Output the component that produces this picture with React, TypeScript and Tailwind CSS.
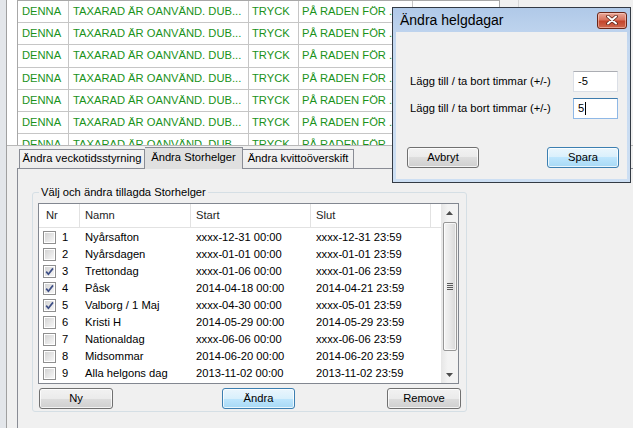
import React from "react";

const holidays = [
  { nr: 1, name: "Nyårsafton", start: "xxxx-12-31 00:00", end: "xxxx-12-31 23:59", checked: false },
  { nr: 2, name: "Nyårsdagen", start: "xxxx-01-01 00:00", end: "xxxx-01-01 23:59", checked: false },
  { nr: 3, name: "Trettondag", start: "xxxx-01-06 00:00", end: "xxxx-01-06 23:59", checked: true },
  { nr: 4, name: "Påsk", start: "2014-04-18 00:00", end: "2014-04-21 23:59", checked: true },
  { nr: 5, name: "Valborg / 1 Maj", start: "xxxx-04-30 00:00", end: "xxxx-05-01 23:59", checked: true },
  { nr: 6, name: "Kristi H", start: "2014-05-29 00:00", end: "2014-05-29 23:59", checked: false },
  { nr: 7, name: "Nationaldag", start: "xxxx-06-06 00:00", end: "xxxx-06-06 23:59", checked: false },
  { nr: 8, name: "Midsommar", start: "2014-06-20 00:00", end: "2014-06-20 23:59", checked: false },
  { nr: 9, name: "Alla helgons dag", start: "2013-11-02 00:00", end: "2013-11-02 23:59", checked: false },
];

function CheckBox({ checked }: { checked: boolean }) {
  return (
    <div className="w-[13px] h-[13px] shrink-0 border border-[#8f8f8f] bg-white p-[1px]">
      <div className="w-[9px] h-[9px] bg-[linear-gradient(135deg,#d4d4d4,#f6f6f6)]">
        {checked && (
          <svg width="9" height="9" viewBox="0 0 9 9" className="block">
            <path d="M1.2 4.6 L3.4 7.2 L8 1.4" fill="none" stroke="#3e4f86" strokeWidth="1.7" />
          </svg>
        )}
      </div>
    </div>
  );
}

function WinButton({ label, primary, className }: { label: string; primary?: boolean; className: string }) {
  return (
    <div
      className={
        "h-[21px] flex items-center justify-center rounded-[3px] border shadow-[inset_0_0_0_1px_rgba(255,255,255,0.75)] " +
        (primary
          ? "border-[#3c7fb1] bg-[linear-gradient(to_bottom,#eaf6fd_0%,#d9f0fc_50%,#bee6fd_50%,#a7d9f5_100%)] "
          : "border-[#707070] bg-[linear-gradient(to_bottom,#f2f2f2_0%,#ebebeb_50%,#dddddd_50%,#cfcfcf_100%)] ") +
        className
      }
    >
      {label}
    </div>
  );
}

function GridRow() {
  return (
    <div className="flex h-[22.2px] border-b border-[#c6c6c6] text-[#1a921a] whitespace-nowrap">
      <div className="w-[51px] border-r border-[#c6c6c6] pl-[4px] flex items-center overflow-hidden">DENNA</div>
      <div className="w-[180px] border-r border-[#c6c6c6] pl-[4px] flex items-center overflow-hidden">TAXARAD ÄR OANVÄND. DUB...</div>
      <div className="w-[50px] border-r border-[#c6c6c6] pl-[3px] flex items-center overflow-hidden">TRYCK</div>
      <div className="w-[114px] border-r border-[#c6c6c6] pl-[3px] flex items-center overflow-hidden">PÅ RADEN FÖR ...</div>
      <div className="w-[85px]" />
    </div>
  );
}

export default function App() {
  return (
    <div className="relative w-[633px] h-[428px] overflow-hidden bg-[#f0f0f0] font-['Liberation_Sans',Arial,sans-serif] text-[11.2px] text-black leading-none">
      <div className="flex h-full">
        <div className="w-[6px] shrink-0 bg-[#e3e6ea]" />
        <div className="w-px shrink-0 bg-[#a0a0a0]" />
        <div className="flex flex-col flex-1 min-w-0">
          {/* data grid */}
          <div className="flex h-[146px] shrink-0 overflow-hidden border-b border-[#b8b8b8]">
            <div className="w-[10px] shrink-0 bg-white" />
            <div className="w-[483px] shrink-0 bg-white border-l border-r border-t border-[#a8a8a8]">
              {Array.from({ length: 7 }).map((_, i) => (
                <GridRow key={i} />
              ))}
            </div>
            <div className="w-[18px] shrink-0" />
            <div className="w-px shrink-0 bg-[#d6d6d6]" />
          </div>
          {/* tabs */}
          <div className="flex h-[22px] shrink-0 items-end pl-[12px]">
            <div className="w-[126px] h-[19px] border-l border-t border-r border-[#898c95] bg-[linear-gradient(to_bottom,#f4f4f4,#ececec)] flex items-center justify-center">
              Ändra veckotidsstyrning
            </div>
            <div className="relative z-10 w-[98px] h-[22px] -mb-px border-t border-r border-[#898c95] bg-[#e0e0e0] flex items-center justify-center pb-[2px]">
              Ändra Storhelger
            </div>
            <div className="w-[111px] h-[19px] border-t border-r border-[#898c95] bg-[linear-gradient(to_bottom,#f4f4f4,#ececec)] flex items-center justify-center">
              Ändra kvittoöverskift
            </div>
          </div>
          {/* tab panel */}
          <div className="ml-[10px] flex-1 border-l border-t border-[#898c95] bg-[#f0f0f0]">
            <fieldset className="ml-[14px] mt-[16px] w-[435px] border border-[#d5dfe5] rounded-[3px] px-[5px] pb-[2px]">
              <legend className="ml-[1px] px-[2px] leading-[14px]">Välj och ändra tillagda Storhelger</legend>
              {/* list view */}
              <div className="mt-[4px] w-[421px] h-[181px] border border-[#828790] bg-white flex">
                <div className="w-[402px] flex flex-col">
                  <div className="flex h-[24px] border-b border-[#e2e2e2] text-[#1e1e1e]">
                    <div className="w-[41px] border-r border-[#e2e2e2] pl-[7px] flex items-center">Nr</div>
                    <div className="w-[111px] border-r border-[#e2e2e2] pl-[5px] flex items-center">Namn</div>
                    <div className="w-[120px] border-r border-[#e2e2e2] pl-[5px] flex items-center">Start</div>
                    <div className="w-[120px] border-r border-[#e2e2e2] pl-[5px] flex items-center">Slut</div>
                    <div className="w-[10px]" />
                  </div>
                  <div className="pt-px">
                    {holidays.map((h) => (
                      <div key={h.nr} className="flex h-[17px] items-center whitespace-nowrap">
                        <div className="w-[41px] pl-[4px] flex items-center">
                          <CheckBox checked={h.checked} />
                          <span className="ml-[6px]">{h.nr}</span>
                        </div>
                        <div className="w-[111px] pl-[5px]">{h.name}</div>
                        <div className="w-[120px] pl-[5px]">{h.start}</div>
                        <div className="w-[120px] pl-[5px]">{h.end}</div>
                      </div>
                    ))}
                  </div>
                </div>
                {/* scrollbar */}
                <div className="w-[17px] flex flex-col bg-[linear-gradient(to_right,#e6e6e6,#f3f3f3_40%,#f3f3f3)]">
                  <div className="h-[17px] flex items-center justify-center">
                    <svg width="7" height="4" viewBox="0 0 7 4">
                      <polygon points="0,4 3.5,0 7,4" fill="#4d4d4d" />
                    </svg>
                  </div>
                  <div className="mt-px ml-[2px] w-[14px] h-[129px] rounded-[2px] border border-[#979797] bg-[linear-gradient(to_right,#f4f4f4,#e8e8e8_50%,#d8d8d8)] shadow-[inset_0_0_0_1px_rgba(255,255,255,0.7)] flex items-center justify-center">
                    <div className="flex flex-col gap-[1px]">
                      <div className="w-[6px] h-px bg-[#5a5a5a]" />
                      <div className="w-[6px] h-px bg-[#5a5a5a]" />
                      <div className="w-[6px] h-px bg-[#5a5a5a]" />
                      <div className="w-[6px] h-px bg-[#5a5a5a]" />
                    </div>
                  </div>
                  <div className="flex-1" />
                  <div className="h-[17px] flex items-center justify-center">
                    <svg width="7" height="4" viewBox="0 0 7 4">
                      <polygon points="0,0 7,0 3.5,4" fill="#4d4d4d" />
                    </svg>
                  </div>
                </div>
              </div>
              {/* buttons */}
              <div className="flex mt-[4px]">
                <WinButton label="Ny" className="ml-[1px] w-[74px]" />
                <WinButton label="Ändra" primary className="ml-[109px] w-[73px]" />
                <WinButton label="Remove" className="ml-[92px] w-[74px]" />
              </div>
            </fieldset>
          </div>
        </div>
      </div>

      {/* dialog window */}
      <div className="absolute left-[392px] top-[7px] w-[239px] h-[176px] border border-[#333a44] bg-[linear-gradient(to_bottom,#b0c9e8,#c4d8f0_20%,#cddff3)] px-[3px] pb-[3px] flex flex-col">
        <div className="h-[24px] flex items-center justify-between pl-[4px]">
          <span className="text-[14px] text-black">Ändra helgdagar</span>
          <div className="w-[30px] h-[17px] rounded-[3px] border border-[#6a2618] bg-[linear-gradient(to_bottom,#e9a99a_0%,#d9735e_45%,#c4452c_55%,#cf6a4f_100%)] flex items-center justify-center shadow-[inset_0_0_0_1px_rgba(255,220,210,0.5)]">
            <svg width="12" height="10" viewBox="0 0 12 10">
              <path d="M2 1.5 L10 8.5 M10 1.5 L2 8.5" stroke="#5a2216" strokeWidth="3.6" strokeLinecap="round" />
              <path d="M2 1.5 L10 8.5 M10 1.5 L2 8.5" stroke="#ffffff" strokeWidth="2" strokeLinecap="round" />
            </svg>
          </div>
        </div>
        <div className="flex-1 bg-[#f0f0f0] pt-[39px]">
          <div className="flex h-[21px] items-center justify-between pl-[14px] pr-[9px]">
            <span>Lägg till / ta bort timmar (+/-)</span>
            <div className="w-[45px] h-[21px] bg-white border border-[#dbdfe6] border-t-[#abadb3] flex items-center pl-[4px]">-5</div>
          </div>
          <div className="mt-[6px] flex h-[21px] items-center justify-between pl-[14px] pr-[9px]">
            <span>Lägg till / ta bort timmar (+/-)</span>
            <div className="w-[45px] h-[21px] bg-white border border-[#8fb8e6] border-t-[#3d7bad] flex items-center pl-[4px]">
              5<span className="ml-px w-px h-[13px] bg-black" />
            </div>
          </div>
          <div className="mt-[28px] flex justify-between pl-[11px] pr-[8px]">
            <WinButton label="Avbryt" className="w-[72px]" />
            <WinButton label="Spara" primary className="w-[72px]" />
          </div>
        </div>
      </div>
    </div>
  );
}
